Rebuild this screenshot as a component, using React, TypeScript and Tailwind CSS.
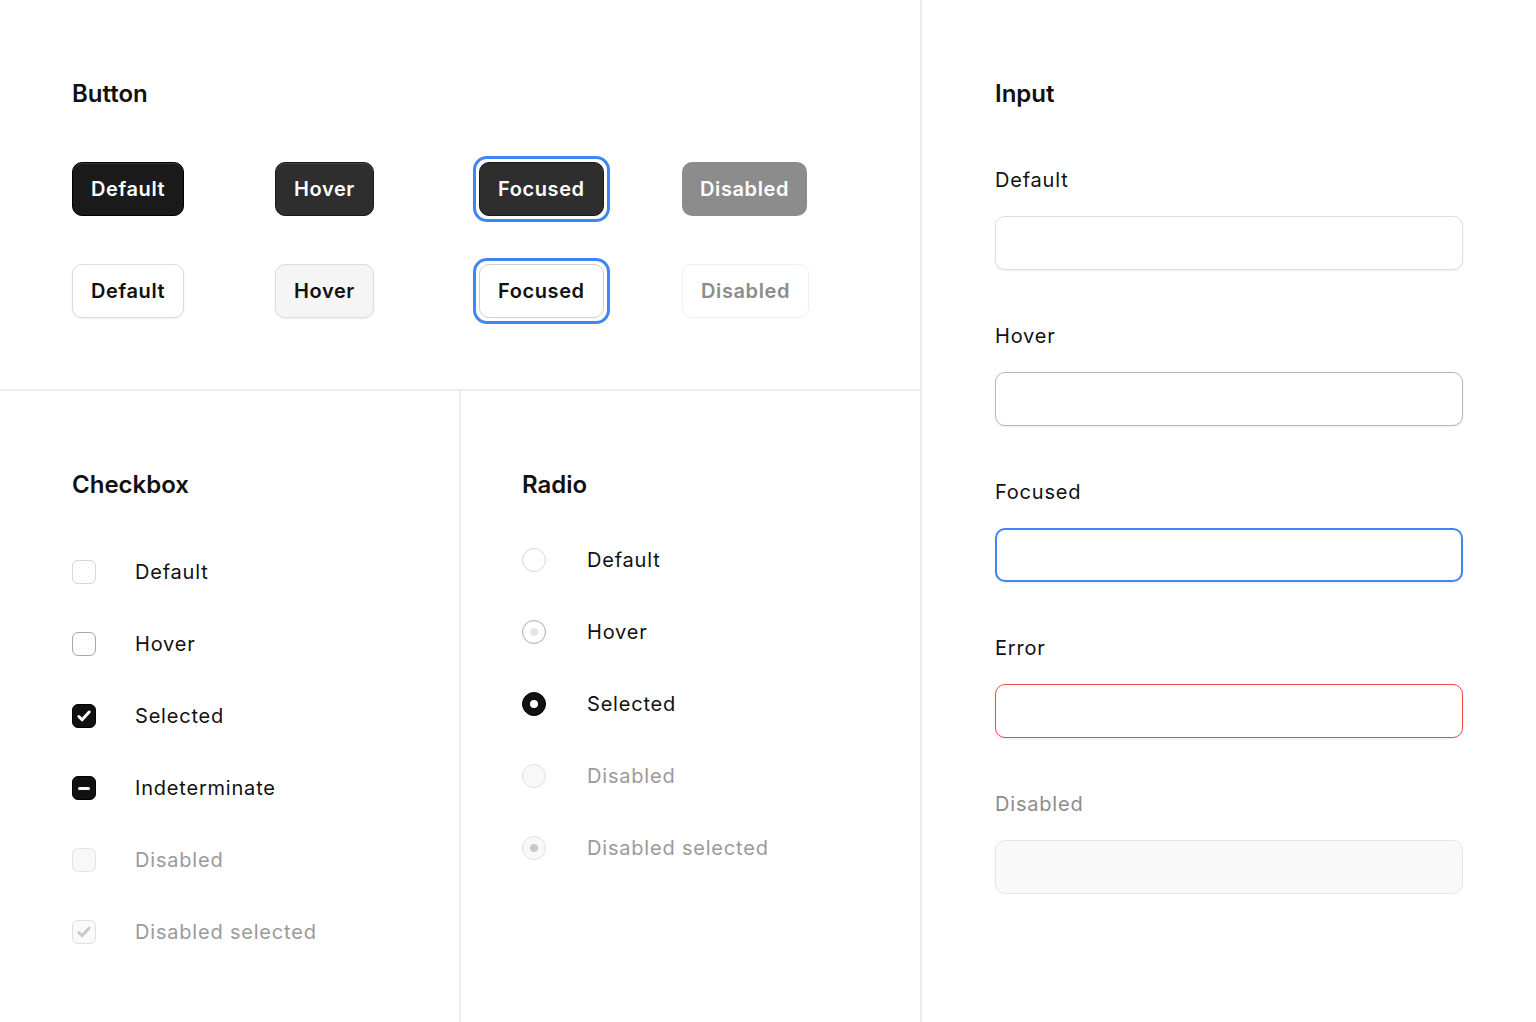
import React from 'react';

const font = { fontFamily: 'Inter, "Noto Sans", sans-serif' };

type BtnProps = { label: string; className: string; focused?: boolean };

const Btn: React.FC<BtnProps> = ({ label, className, focused }) => {
  const btn = (
    <div className={`flex h-[54px] items-center justify-center rounded-[10px] px-[18px] text-[20px] font-semibold tracking-[0.03em] ${className}`}>
      {label}
    </div>
  );
  if (!focused) return btn;
  return <div className="-m-[6px] rounded-[14px] border-[3px] border-[#3f86f5] p-[3px]">{btn}</div>;
};

const Check = ({ color }: { color: string }) => (
  <svg width="18" height="18" viewBox="0 0 16 16" fill="none">
    <path d="M3.4 8.4l2.9 3 6.3-7" stroke={color} strokeWidth="2.6" strokeLinecap="round" strokeLinejoin="round" />
  </svg>
);

type BoxState = 'default' | 'hover' | 'selected' | 'indeterminate' | 'disabled' | 'disabledSelected';

const CheckBox: React.FC<{ state: BoxState }> = ({ state }) => {
  const base = 'flex h-6 w-6 shrink-0 items-center justify-center rounded-[6px] border';
  switch (state) {
    case 'default':
      return <div className={`${base} border-[#d6d6d6] bg-white`} />;
    case 'hover':
      return <div className={`${base} border-[#a8a8a8] bg-white`} />;
    case 'selected':
      return (
        <div className={`${base} border-[#000] bg-[#111]`}>
          <Check color="#fff" />
        </div>
      );
    case 'indeterminate':
      return (
        <div className={`${base} border-[#000] bg-[#111]`}>
          <div className="h-[3px] w-[12px] rounded-full bg-white" />
        </div>
      );
    case 'disabled':
      return <div className={`${base} border-[#e4e4e4] bg-[#f8f8f8]`} />;
    default:
      return (
        <div className={`${base} border-[#e0e0e0] bg-[#fafafa]`}>
          <Check color="#c9c9c9" />
        </div>
      );
  }
};

type RadioState = 'default' | 'hover' | 'selected' | 'disabled' | 'disabledSelected';

const Radio: React.FC<{ state: RadioState }> = ({ state }) => {
  const base = 'flex h-6 w-6 shrink-0 items-center justify-center rounded-full border';
  switch (state) {
    case 'default':
      return <div className={`${base} border-[#d6d6d6] bg-white`} />;
    case 'hover':
      return (
        <div className={`${base} border-[#a8a8a8] bg-white`}>
          <div className="h-2 w-2 rounded-full bg-[#e6e6e6]" />
        </div>
      );
    case 'selected':
      return (
        <div className={`${base} border-[#000] bg-[#111]`}>
          <div className="h-2 w-2 rounded-full bg-white" />
        </div>
      );
    case 'disabled':
      return <div className={`${base} border-[#e0e0e0] bg-[#f8f8f8]`} />;
    default:
      return (
        <div className={`${base} border-[#e0e0e0] bg-[#f8f8f8]`}>
          <div className="h-2 w-2 rounded-full bg-[#c9c9c9]" />
        </div>
      );
  }
};

const checkboxes: { label: string; state: BoxState }[] = [
  { label: 'Default', state: 'default' },
  { label: 'Hover', state: 'hover' },
  { label: 'Selected', state: 'selected' },
  { label: 'Indeterminate', state: 'indeterminate' },
  { label: 'Disabled', state: 'disabled' },
  { label: 'Disabled selected', state: 'disabledSelected' },
];

const radios: { label: string; state: RadioState }[] = [
  { label: 'Default', state: 'default' },
  { label: 'Hover', state: 'hover' },
  { label: 'Selected', state: 'selected' },
  { label: 'Disabled', state: 'disabled' },
  { label: 'Disabled selected', state: 'disabledSelected' },
];

const inputs = [
  { label: 'Default', box: 'border border-[#dedede] bg-white shadow-[0_1px_2px_rgba(0,0,0,0.08)]', text: 'text-[#111]' },
  { label: 'Hover', box: 'border border-[#b8b8b8] bg-white shadow-[0_1px_2px_rgba(0,0,0,0.08)]', text: 'text-[#111]' },
  { label: 'Focused', box: 'border-[2.5px] border-[#3f86f5] bg-white shadow-[0_1px_2px_rgba(0,0,0,0.08)]', text: 'text-[#111]' },
  { label: 'Error', box: 'border-[1.5px] border-[#ee4a4a] bg-white shadow-[0_1px_2px_rgba(0,0,0,0.08)]', text: 'text-[#111]' },
  { label: 'Disabled', box: 'border border-[#e6e6e6] bg-[#f9f9f9]', text: 'text-[#8c8c8c]' },
];

export default function App() {
  return (
    <div className="flex h-[1022px] w-full overflow-hidden bg-white text-[#111]" style={font}>
      {/* Left column */}
      <div className="flex w-[922px] shrink-0 flex-col border-r-2 border-[#ececec]">
        {/* Button */}
        <section className="h-[391px] shrink-0 border-b-2 border-[#ececec] px-[72px] pt-[74px]">
          <h2 className="h-10 text-[24px] font-semibold leading-10">Button</h2>
          <div className="mt-[48px] grid grid-cols-[203px_204px_203px_1fr] items-center justify-items-start gap-y-12">
            <Btn label="Default" className="border border-black bg-[#1a1a1a] text-white shadow-[inset_0_1px_0_rgba(255,255,255,0.12)]" />
            <Btn label="Hover" className="border border-[#1a1a1a] bg-[#2e2e2e] text-white shadow-[inset_0_1px_0_rgba(255,255,255,0.1)]" />
            <Btn focused label="Focused" className="border border-[#1a1a1a] bg-[#2e2e2e] text-white" />
            <Btn label="Disabled" className="bg-[#8c8c8c] text-white" />
            <Btn label="Default" className="border border-[#dcdcdc] bg-white text-[#111] shadow-[0_1px_2px_rgba(0,0,0,0.08)]" />
            <Btn label="Hover" className="border border-[#dcdcdc] bg-[#f5f5f5] text-[#111] shadow-[0_1px_2px_rgba(0,0,0,0.08)]" />
            <Btn focused label="Focused" className="border border-[#cfcfcf] bg-white text-[#111]" />
            <Btn label="Disabled" className="border border-[#f0f0f0] bg-white text-[#8c8c8c]" />
          </div>
        </section>

        <div className="grid flex-1 grid-cols-[461px_1fr]">
          {/* Checkbox */}
          <section className="border-r-2 border-[#ececec] pl-[72px] pt-[74px]">
            <h2 className="h-10 text-[24px] font-semibold leading-10">Checkbox</h2>
            <div className="mt-[53px] flex flex-col gap-[44px]">
              {checkboxes.map((c) => (
                <div key={c.label} className="flex h-7 items-center gap-[39px]">
                  <CheckBox state={c.state} />
                  <span className={`text-[20px] leading-7 tracking-[0.04em] ${c.state.startsWith('disabled') ? 'text-[#9a9a9a]' : 'text-[#111]'}`}>
                    {c.label}
                  </span>
                </div>
              ))}
            </div>
          </section>

          {/* Radio */}
          <section className="pl-[61px] pt-[74px]">
            <h2 className="h-10 text-[24px] font-semibold leading-10">Radio</h2>
            <div className="mt-[41px] flex flex-col gap-[44px]">
              {radios.map((r) => (
                <div key={r.label} className="flex h-7 items-center gap-[41px]">
                  <Radio state={r.state} />
                  <span className={`text-[20px] leading-7 tracking-[0.04em] ${r.state.startsWith('disabled') ? 'text-[#9a9a9a]' : 'text-[#111]'}`}>
                    {r.label}
                  </span>
                </div>
              ))}
            </div>
          </section>
        </div>
      </div>

      {/* Input */}
      <section className="flex-1 px-[73px] pt-[74px]">
        <h2 className="h-10 text-[24px] font-semibold leading-10">Input</h2>
        <div className="mt-[52px] flex flex-col gap-[52px]">
          {inputs.map((i) => (
            <div key={i.label} className="flex flex-col gap-[22px]">
              <span className={`h-7 text-[20px] leading-7 tracking-[0.04em] ${i.text}`}>{i.label}</span>
              <div className={`h-[54px] w-full rounded-[10px] ${i.box}`} />
            </div>
          ))}
        </div>
      </section>
    </div>
  );
}
